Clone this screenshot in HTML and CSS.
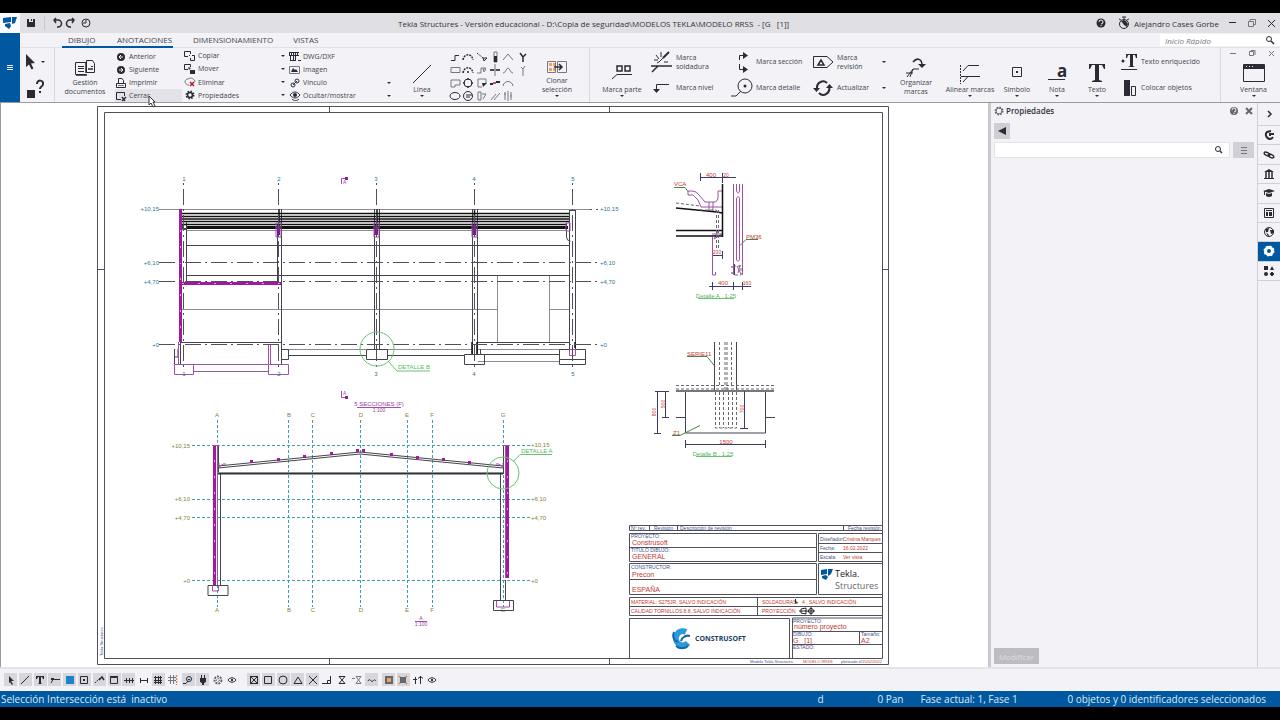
FILE: index.html
```html
<!DOCTYPE html>
<html lang="es">
<head>
<meta charset="utf-8">
<title>Tekla Structures - MODELO RRSS</title>
<link rel="stylesheet" href="styles.css">
</head>
<body>
<header class="titlebar">
  <div class="title-left">
    <span class="logo"><svg width="20" height="20" viewBox="0 0 20 20"><path class="brand" d="M3 5l8-1v5l-8 1zM12 4h5l-2 6-3 1zM5 11l5-1 1 3-2 3-4-3z"/></svg></span>
    <button class="tb" aria-label="Guardar"><svg width="12" height="12" viewBox="0 0 12 12"><path class="f" d="M2 2h2v3h4V2h2v8H2z"/><path class="f" d="M6 2h1v2H6z"/></svg></button>
    <span class="title-sep"></span>
    <button class="tb" aria-label="Deshacer"><svg width="12" height="12" viewBox="0 0 12 12"><path class="s2" d="M3 3h4a3 3 0 0 1 0 7H6M5 1L3 3l2 3"/></svg></button>
    <button class="tb" aria-label="Rehacer"><svg width="12" height="12" viewBox="0 0 12 12"><path class="s2" d="M9 3H5a3 3 0 0 0 0 7h1M7 1l2 2-2 3"/></svg></button>
    <button class="tb" aria-label="Historial"><svg width="12" height="12" viewBox="0 0 12 12"><circle class="s" cx="7" cy="6" r="4"/><path class="s" d="M7 3v3H4"/></svg></button>
  </div>
  <h1 class="title">Tekla Structures - Versión educacional - D:\Copia de seguridad\MODELOS TEKLA\MODELO RRSS&nbsp; - [G&nbsp;&nbsp; [1]]</h1>
  <div class="title-right">
    <button class="tb" aria-label="Ayuda"><svg width="12" height="12" viewBox="0 0 12 12"><circle class="f" cx="6" cy="6" r="4.500"/><path class="w" d="M4 5a2 2 0 1 1 2 2M6 8v1"/></svg></button>
    <svg class="clock" width="12" height="14" viewBox="0 0 12 14"><circle class="s" cx="6" cy="8" r="4.500"/><path class="s" d="M4 1h4M6 1v2M1 3l2 1M11 3l-2 1"/><path class="f" d="M6 4l-3 1 3 4 3 2 1-3-2-3z"/></svg>
    <span class="user">Alejandro Cases Gorbe</span>
    <button class="wb" aria-label="Minimizar"><svg width="10" height="10" viewBox="0 0 10 10"><path class="s" d="M1 4.500h7"/></svg></button>
    <button class="wb" aria-label="Restaurar"><svg width="10" height="10" viewBox="0 0 10 10"><path class="g" d="M1.500 3.500h5v5h-5zM3 3V1.500h5.500v5H7"/></svg></button>
    <button class="wb" aria-label="Cerrar ventana"><svg width="10" height="10" viewBox="0 0 10 10"><path class="s" d="M2 2l7 7M9 2L2 9"/></svg></button>
  </div>
</header>

<div class="top">
  <button class="menu" aria-label="Menú"><svg width="10" height="10" viewBox="0 0 10 10"><path class="w" d="M2 2.500h6M2 4.500h6M2 6.500h6"/></svg></button>
  <div class="top-body">
    <nav class="tabs">
      <button class="tab tab-dibujo on">DIBUJO</button>
      <button class="tab tab-anot on">ANOTACIONES</button>
      <button class="tab tab-far">DIMENSIONAMIENTO</button>
      <button class="tab tab-far">VISTAS</button>
      <label class="quick"><input type="search" placeholder="Inicio Rápido" aria-label="Inicio Rápido"><svg width="10" height="10" viewBox="0 0 10 10"><circle class="s" cx="4" cy="4" r="2.500"/><path class="s2" d="M6 6l3 3"/></svg></label>
    </nav>
    <div class="ribbon">
      <div class="group pick">
        <button class="ib" aria-label="Seleccionar"><svg width="22" height="16" viewBox="0 0 22 16"><path class="f" d="M1 0l9 9-4 .5 2.500 5-2 1-2.500-5L1 13z"/><path class="f" d="M16 7h4l-2 2z"/></svg></button>
        <button class="ib" aria-label="Consultar"><svg width="22" height="20" viewBox="0 0 22 20"><path class="f" d="M2 11h8v8H2z"/><path class="s3" d="M12 5c0-5 7-4 6 0 0 3-3 2-3 5M15 12v2"/></svg></button>
      </div>
      <div class="group g-draw">
        <button class="big b-doc"><svg width="22" height="20" viewBox="0 0 22 20"><path class="s" d="M12 16.500H1.500v-12H12M4 8.500h6M4 10.500h6M4 13.500h6M12.500 2.500h6l2 3v9h-8z"/><path class="s2" d="M14 11h5M12 4v11M2 17h11"/><path class="s" d="M17 8.500h2"/></svg><span>Gestión<br>documentos</span></button>
        <div class="list l1">
          <button class="row"><svg width="12" height="12" viewBox="0 0 12 12"><circle class="f" cx="6" cy="6" r="4"/><path class="w" d="M8 6H4M6 4L4 6l2 2"/></svg>Anterior</button>
          <button class="row"><svg width="12" height="12" viewBox="0 0 12 12"><circle class="f" cx="6" cy="6" r="4"/><path class="w" d="M4 6h4M6 4l2 2-2 2"/></svg>Siguiente</button>
          <button class="row"><svg width="12" height="12" viewBox="0 0 12 12"><path class="s" d="M3.500 7V1.500H7l1.500 2V7M1.500 6.500h9v4h-9z"/><path class="g" d="M3 8.500h6"/></svg>Imprimir</button>
          <button class="row hot"><svg width="12" height="12" viewBox="0 0 12 12"><path class="s" d="M6 9.500H1.500v-7h8V6"/><path class="s2" d="M7 7l3 4M11 7l-4 4"/></svg>Cerrar<svg class="cursor" width="9" height="13" viewBox="0 0 9 13"><path d="M1 1l6 6H5l2 4-2 1-2-4-2 2z"/></svg></button>
        </div>
        <div class="list l2">
          <button class="row"><svg width="12" height="12" viewBox="0 0 12 12"><path class="s" d="M4 6.500H.5v-5h6V4M6 5.500H5M8 5.500h2.500v5h-4V8"/></svg>Copiar<i class="caret"></i></button>
          <button class="row"><svg width="12" height="12" viewBox="0 0 12 12"><path class="s" d="M4 6.500H.5v-5h6V4"/><path class="f" d="M6 7h5v4H6zM4 4l3 1-2 2z"/></svg>Mover<i class="caret"></i></button>
          <button class="row"><svg width="12" height="12" viewBox="0 0 12 12"><path class="g" d="M5 9C0 9 0 3 4 3c3-2 7 0 7 3"/><path class="r" d="M6 6l4 4M10 6l-4 4"/></svg>Eliminar<i class="caret"></i></button>
          <button class="row"><svg width="12" height="12" viewBox="0 0 12 12"><circle class="gear" cx="6" cy="6" r="3.500"/><circle class="s2" cx="6" cy="6" r="2.500"/></svg>Propiedades<i class="caret"></i></button>
        </div>
        <div class="list l3">
          <button class="row"><svg width="12" height="12" viewBox="0 0 12 12"><path class="s" d="M.5 1v4M2.500 1v3M4.500 1v3M6.500 1v3M8.500 1v3M0 4.500h10M1.500 5v5M4.500 5v5M6.500 5v4M1 9.500h6M0 1.500h10M9 9.500h3"/></svg>DWG/DXF</button>
          <button class="row"><svg width="12" height="12" viewBox="0 0 12 12"><path class="g" d="M.5 2.500h10v7H.5z"/><path class="f" d="M2 8l2-4 2 2 1-1 2 3z"/></svg>Imagen</button>
          <button class="row"><svg width="12" height="12" viewBox="0 0 12 12"><circle class="s" cx="4" cy="8" r="2"/><circle class="s" cx="8" cy="4" r="2"/><path class="s" d="M4 8l4-4"/></svg>Vínculo<i class="caret"></i></button>
          <button class="row"><svg width="12" height="12" viewBox="0 0 12 12"><path class="s" d="M1 5c3-4 7-4 10 0-3 4-7 4-10 0M3 9c2 2 5 2 7 0"/><circle class="f" cx="6" cy="5" r="2"/></svg>Ocultar/mostrar<i class="caret"></i></button>
        </div>
        <button class="big b-40"><svg width="22" height="22" viewBox="0 0 22 22"><path class="s" d="M2 20L20 2"/></svg><span>Línea</span><i class="caret"></i></button>
        <div class="shapes">
          <button aria-label="Polilínea"><svg viewBox="0 0 12 12"><path class="s" d="M2 9.500h4v-5h4"/></svg></button>
          <button aria-label="Arco"><svg viewBox="0 0 12 12"><path class="s2 dot" d="M1 9c1-7 9-7 10 0"/></svg></button>
          <button aria-label="Punto"><svg viewBox="0 0 12 12"><path class="s dot" d="M1 2l6 5"/><path class="s" d="M7 7h4l-3 3z"/></svg></button>
          <button aria-label="Cota"><svg viewBox="0 0 12 12"><path class="g" d="M5 1h3v10H5z"/><path class="f" d="M5 5h3v6H5z"/></svg></button>
          <button aria-label="Vértice"><svg viewBox="0 0 12 12"><path class="g" d="M1 9l5-6 5 6"/></svg></button>
          <button aria-label="Bifurcar"><svg viewBox="0 0 12 12"><path class="s2" d="M7 11V6L4 2M7 6l3-3"/></svg></button>
          <button aria-label="Rectángulo"><svg viewBox="0 0 12 12"><path class="g" d="M2 3.500h9v5H2z"/></svg></button>
          <button aria-label="Arco centro"><svg viewBox="0 0 12 12"><path class="s2 dot" d="M1 9c1-7 9-7 10 0M5 8h2"/></svg></button>
          <button aria-label="Nube"><svg viewBox="0 0 12 12"><path class="g" d="M1 9h4V4h5M7 5h3l-2 3z"/></svg></button>
          <button aria-label="Cruz"><svg viewBox="0 0 12 12"><path class="g" d="M1 6h10M6 0v12"/><path class="s2" d="M1 6h4M7 6h4"/></svg></button>
          <button aria-label="Curva"><svg viewBox="0 0 12 12"><path class="g" d="M1 9c3 0 3-5 5-5s2 5 5 5"/></svg></button>
          <button aria-label="Dividir"><svg viewBox="0 0 12 12"><path class="g" d="M7 12V5L5 3M7 5l2-3"/></svg></button>
          <button aria-label="Polígono"><svg viewBox="0 0 12 12"><path class="g" d="M2 3h9v5H6v2H2z"/></svg></button>
          <button aria-label="Círculo"><svg viewBox="0 0 12 12"><circle class="s" cx="6" cy="6" r="4"/><path class="s2" d="M6 1v2M6 9v2M1 6h2M9 6h2"/></svg></button>
          <button aria-label="Región"><svg viewBox="0 0 12 12"><path class="g" d="M6 10H2V2h8v4"/><path class="f" d="M6 6h5l-4 4z"/></svg></button>
          <button aria-label="Cortar"><svg viewBox="0 0 12 12"><path class="s3" d="M1 7h3M7 5h4"/><path class="r" d="M4 6h3"/></svg></button>
          <button aria-label="Arco simple"><svg viewBox="0 0 12 12"><path class="g" d="M1 9c1-6 9-6 10 0"/></svg></button>
          <i></i>
          <button aria-label="Elipse"><svg viewBox="0 0 12 12"><ellipse class="s" cx="6" cy="6" rx="5" ry="3.500"/></svg></button>
          <button aria-label="Círculo radio"><svg viewBox="0 0 12 12"><circle class="s" cx="6" cy="6" r="4.500"/><path class="s" d="M4 5h6M4 7h4"/></svg></button>
          <button aria-label="Hoja"><svg viewBox="0 0 12 12"><path class="g" d="M2 2h3v8H2zM6 4h4l-3 5"/></svg></button>
          <button aria-label="Paralela"><svg viewBox="0 0 12 12"><path class="g" d="M2 10l5-6M5 10l6-7"/></svg></button>
          <button aria-label="Espejo"><svg viewBox="0 0 12 12"><path class="g" d="M3 2v8M6 1v10M9 2v8M2 4h2M8 6h2"/></svg></button>
        </div>
        <button class="big b-40"><svg width="22" height="18" viewBox="0 0 22 18"><path class="g" d="M1.500 3.500h8v11h-8zM11.500 3.500h9v11h-9z"/><path class="o" d="M3 5h3v3H3zM7 5h2v3H7zM3 10h3v3H3zM7 10h2v3H7z"/><path class="s2" d="M8 9h8M13 6l3 3-3 3"/></svg><span>Clonar<br>selección</span><i class="caret"></i></button>
      </div>
      <div class="group g-mark">
        <button class="big b-50"><svg width="22" height="24" viewBox="0 0 22 24"><path class="s2" d="M6 5h5v5H6zM14 5h5v5h-5z"/><path class="s" d="M1 18l5-4.500h15"/></svg><span>Marca parte</span><i class="caret"></i></button>
        <div class="pair p-80">
          <button class="row"><svg width="22" height="22" viewBox="0 0 22 22"><path class="s2" d="M0 15h21M1 21l6-6"/><path class="s" d="M5 4l3 4M10 1v5M3 9h4M8 11l5-5M13 11h4M6 12l2-1"/><path class="s3" d="M12 7l6-6"/></svg><span>Marca<br>soldadura</span></button>
          <button class="row"><svg width="22" height="18" viewBox="0 0 22 18"><path class="s" d="M5.500 12V5.500H18"/><path class="f" d="M2 10h7l-3.500 4z"/></svg><span>Marca nivel</span></button>
        </div>
        <div class="pair p-81">
          <button class="row r-sec"><svg width="14" height="22" viewBox="0 0 14 22"><path class="s" d="M2.500 9V4.500H7M2.500 13v5.500H7"/><path class="f" d="M6 1l5 3.500L6 8zM6 15l5 3.500L6 22z"/></svg><span>Marca sección</span></button>
          <button class="row"><svg width="22" height="20" viewBox="0 0 22 20"><circle class="s" cx="14" cy="8" r="7"/><circle class="f" cx="14" cy="8" r="1.500"/><path class="s" d="M0 18h5l5-5"/></svg><span>Marca detalle</span></button>
        </div>
        <div class="pair p-77">
          <button class="row"><svg width="22" height="16" viewBox="0 0 22 16"><path class="s" d="M1.500 2.500H15l6 5.500-6 5.500H1.500z"/><path class="s2" d="M6 11l3-5 3 5z"/></svg><span>Marca<br>revisión</span><i class="caret"></i></button>
          <button class="row"><svg width="22" height="18" viewBox="0 0 22 18"><path class="s3" d="M5 9a6 6 0 0 1 10-5M17 8a6 6 0 0 1-10 6"/><path class="f" d="M1 9h7l-3.500 4zM14 9h7l-3.500-4z"/></svg><span>Actualizar</span><i class="caret"></i></button>
        </div>
        <button class="big b-doc b-42"><svg width="22" height="22" viewBox="0 0 22 22"><path class="s" d="M2 21l6-8h6M1 17h7M5 21l3-8"/><path class="s2" d="M8 6c4-5 9-3 9 3"/><path class="f" d="M13 8h8l-4 4z"/></svg><span>Organizar<br>marcas</span></button>
        <button class="big b-54"><svg width="22" height="24" viewBox="0 0 22 24"><path class="s dot" d="M1.500 4v19"/><path class="s" d="M4 10l5-5.500h11M4 21l5-5.500h12M2 15.500h7"/></svg><span>Alinear marcas</span><i class="caret"></i></button>
        <button class="big b-40"><svg width="12" height="24" viewBox="0 0 12 24"><path class="s" d="M1.500 6.500h9v9h-9z"/><path class="f" d="M5 10h2v2H5z"/></svg><span>Símbolo</span><i class="caret"></i></button>
        <button class="big b-40"><svg width="22" height="24" viewBox="0 0 22 24"><text class="glyph" x="11" y="16" font-size="17">a</text><path class="s" d="M2 18.500h17"/></svg><span>Nota</span><i class="caret"></i></button>
        <button class="big b-40"><svg width="22" height="24" viewBox="0 0 22 24"><path class="f" d="M3 3h16v5h-1l-2-4h-3v15l3 1v1H6v-1l3-1V4H6L4 8H3z"/></svg><span>Texto</span><i class="caret"></i></button>
        <div class="pair p-92">
          <button class="row"><svg width="18" height="20" viewBox="0 0 18 20"><path class="f" d="M6 2h11v4h-1l-1-3h-2v11l2 1H8l2-1V3H8L7 6H6z"/><circle class="f" cx="3" cy="9" r="1.500"/><path class="s" d="M1 17.500h16"/></svg><span>Texto enriquecido</span></button>
          <button class="row"><svg width="18" height="18" viewBox="0 0 18 18"><path class="f" d="M4 1h6v16H4z"/><path class="s" d="M11.500 7.500h4v9h-4z"/></svg><span>Colocar objetos</span></button>
        </div>
      </div>
      <div class="group g-win">
        <div class="mdi"><button class="wb" aria-label="Minimizar dibujo"><svg width="10" height="10" viewBox="0 0 10 10"><path class="g" d="M2 5.500h6"/></svg></button><button class="wb" aria-label="Restaurar dibujo"><svg width="10" height="10" viewBox="0 0 10 10"><path class="g" d="M2.500 3.500h4v4h-4zM4 3V2.500h4V7"/></svg></button><button class="wb" aria-label="Cerrar dibujo"><svg width="10" height="10" viewBox="0 0 10 10"><path class="g" d="M3 3l5 5M8 3L3 8"/></svg></button></div>
        <button class="big b-win"><svg width="24" height="22" viewBox="0 0 24 22"><path class="s" d="M1.500 1.500h21v17h-21z"/><path class="f" d="M2 2h20v4H2z"/><path class="w" d="M4 3.500h1M7 3.500h1M10 3.500h1"/></svg><span>Ventana</span><i class="caret"></i></button>
      </div>
    </div>
  </div>
</div>

<main class="main">
  <section class="canvas" aria-label="Dibujo G [1]">
    <svg class="sheet" viewBox="0 103 988 564">
      <g class="frame">
        <path d="M97.500 106.500h791v558h-791zM104.500 112.500h778v546h-778zM329.500 106v6M609.500 106v6M329.500 659v6M609.500 659v6M97 269.500h7M883 269.500h6"/>
      </g>

      <!-- longitudinal section -->
      <g class="thin">
        <path d="M159 209.500h431M187 230.500h380M182 309.500h315M549 309.500h20M477 349.500h83M288 349.500h78M387 349.500h85M478 361.500h82"/>
        <path d="M497.500 276v67M549.500 276v67"/>
      </g>
      <g class="ink">
        <path d="M187 245.500h382M187 275.500h382M186.500 222v59M277.500 230v51M281.500 209v155M374.500 209v140M379.500 209v140M472.500 209v145M477.500 209v145M569.500 210v139M575.500 210v139M569 210.500h6M288 355.500h78M387 355.500h77M281.500 349.500h7v10h-7M366.500 349.500h21v10h-21zM464.500 354.500h20v10h-20zM559.500 349.500h26v15h-26zM560 359.500h25M180.500 343v21M180 342.500h101M477 342.500h92M480.500 355v-6M480 354.500h80M174.500 349v15M178 349v8h-4M566.500 223v14q0 4 4 4"/>
      </g>
      <g class="bold">
        <path d="M182 213.500h387M182 216.500h387M182 219h387M182 221.500h387M182 224.500h385"/>
        <path class="heavy" d="M187 227.500h381"/>
        <path d="M279 209v14M377 209v14M474.500 209v14M183 224v5h3M575 342v6M477 342v12M472 342v12"/>
      </g>
      <path class="mag-wide" d="M180.500 209v133"/>
      <path class="mag-wide" d="M181 283.500h100"/>
      <path class="speck" d="M182 283.500h98M180.500 230v110"/>
      <path class="mag" d="M174.500 364.500h19v10h-19zM268.500 364.500h20v10h-20zM194 371.500h74M268.500 344v20M270.500 344v20M178.500 342v22M193 364.500h75M569.500 349.500h6v6h-6zM566 223h4v8h-4zM276 223h5v14h-5zM374 223h5v14h-5zM472 223h5v14h-5z"/>
      <path class="mag2" d="M278.500 225v10M376.500 225v10M474.500 225v10"/>
      <g class="axis">
        <path d="M183.500 189v180M278.500 189v180M376.500 189v180M474.500 189v180M572.500 189v180"/>
        <path d="M159 262.500h440M159 281.500h440M159 344.500h440"/>
      </g>
      <path class="axis-dot" d="M183.500 183v6M278.500 183v6M376.500 183v6M474.500 183v6M572.500 183v6M590 209.500h9"/>
      <g class="blue t6 mid">
        <text x="184" y="181">1</text><text x="279" y="181">2</text><text x="376" y="181">3</text><text x="474" y="181">4</text><text x="573" y="181">5</text>
        <text x="184" y="376">1</text><text x="279" y="376">2</text><text x="376" y="376">3</text><text x="474" y="376">4</text><text x="573" y="376">5</text>
      </g>
      <g class="blue t6 end"><text x="159" y="211">+10,15</text><text x="159" y="265">+6,10</text><text x="159" y="284">+4,70</text><text x="159" y="347">+0</text></g>
      <g class="blue t6"><text x="600" y="211">+10,15</text><text x="600" y="265">+6,10</text><text x="600" y="284">+4,70</text><text x="600" y="347">+0</text></g>
      <g class="green"><circle cx="377" cy="349" r="17"/><path d="M388 361l9 10h33"/></g>
      <text class="green-t t6" x="398" y="369">DETALLE B</text>
      <path class="mag" d="M341.500 184v-5.500h5M341.500 391v6.500h5"/>
      <path class="dots thin-dots" d="M345 178.500h3M345 397.500h3"/>
      <g class="mag-t t5"><text x="343" y="184">A</text><text x="343" y="395">A</text></g>

      <!-- transverse section -->
      <g class="mag-t t5 mid"><text class="t6" x="379" y="406">5 SECCIONES (F)</text><text x="379" y="412">1:100</text><text x="421" y="620">A</text><text x="421" y="626">1:100</text></g>
      <path class="mag" d="M357 407.500h44M415 621.500h12"/>
      <path class="grid" d="M217.500 420v187M288.500 420v187M312.500 420v187M360.500 420v187M407.500 420v187M432.500 420v187M503.500 420v187M192 445.500h338M192 499.500h338M192 517.500h338M192 580.500h338"/>
      <g class="olive t6 mid">
        <text x="217" y="417">A</text><text x="289" y="417">B</text><text x="313" y="417">C</text><text x="361" y="417">D</text><text x="407" y="417">E</text><text x="432" y="417">F</text><text x="503" y="417">G</text>
        <text x="217" y="612">A</text><text x="289" y="612">B</text><text x="313" y="612">C</text><text x="361" y="612">D</text><text x="407" y="612">E</text><text x="432" y="612">F</text><text x="503" y="612">G</text>
      </g>
      <g class="olive t6 end"><text x="190" y="448">+10,15</text><text x="190" y="501">+6,10</text><text x="190" y="520">+4,70</text><text x="190" y="583">+0</text></g>
      <g class="olive t6"><text x="531" y="447">+10,15</text><text x="531" y="501">+6,10</text><text x="531" y="520">+4,70</text><text x="531" y="583">+0</text></g>
      <path class="ink" d="M220.500 474v111M218.500 445v29M208 585.500h20v10h-20zM500.500 474v126M505.500 580v20M503.500 445v29M493.500 600.500h20v10h-20zM218 466l142-14 143 14M218 468l142-14 143 14"/>
      <path class="beam" d="M218 473.500h285"/>
      <path class="thin" d="M218 472.500h285"/>
      <path class="mag-wide" d="M214.500 446v139M507.500 446v132"/>
      <path class="speck" d="M214.500 460v120M507.500 460v115"/>
      <path class="mag" d="M213 445.500h6M217.500 446v139M503 445.500h6M505.500 446v132M212.500 585v6h6v-6M496.500 601v6h13v-6M219 463v4l4-3h3M503 463v4l-4-3h-3"/>
      <path class="dots" d="M250 461.500h3M277 459.500h3M303 456.500h3M330 453.500h3M356 450.500h3M362 450.500h3M390 454.500h3M416 457.500h3M442 459.500h3M468 462.500h3"/>
      <g class="green"><circle cx="503" cy="473" r="16"/><path d="M513 462l7-7.500h32"/></g>
      <text class="green-t t6" x="521" y="453">DETALLE A</text>

      <!-- detail A -->
      <path class="dim" d="M700 177.500h36M700.500 173v8M722.500 173v10M712 255.500h11M722.500 251v8M712.500 251v8M709 286.500h42M712.500 282v8M733.500 282v8M742.500 282v8M734.500 264v11M731 267h4M731 273h4"/>
      <g class="red t5 mid"><text class="t6" x="711" y="177">400</text><text x="726" y="177">20</text><text x="717" y="254">200</text><text class="t6" x="723" y="285">400</text><text x="747" y="285">160</text></g>
      <g class="red t6"><text x="674" y="186">VCA</text><text x="746" y="239">PM36</text></g>
      <path class="leader" d="M674 187.500h11l3 4M758 239.500h-12l-6 6"/>
      <path class="mag" d="M688 191l4 0q5 0 7 4l6 7h10q2 0 3-4v-7h4M688 191v4h5l5 5 3 7h21M709 202v9M713 202v9M712.500 237v38l3 0v-3M733.500 184v91M742.500 184v91M736.500 184v7q2 4 3 0v-7M736.500 198q2-3 3 0v62q-2 3-3 0zM712 234h10l-8 5 4-8M737 266l4 8M738 273l2-8"/>
      <path class="bold" d="M722.500 184v53M676 208l41 4 5 1M676 230.500h47M676 236h47"/>
      <path class="dash" d="M676 203l24 3M716.500 210v39M718.500 210v39M700 210h16M733 266h8v9h-8"/>
      <g class="green-t t6 mid"><text x="716" y="298">Detalle A , 1:25</text></g>
      <path class="green" d="M698 298.500h36"/>

      <!-- detail B -->
      <path class="ink" d="M714.500 342v49M736.500 342v49M685.500 391v42h80v-42M676 417.500h9M766 417.500h9"/>
      <path class="deck" d="M676 391h98"/>
      <path class="dash" d="M719.500 342v44M725 342v48M727 342v48M731.500 342v44M676 385.500h98M676 389h98M715.500 392v36h21v-36M719.500 392v36M723.500 392v36M728.500 392v36M732.500 392v36"/>
      <path class="dim" d="M655 391.500h14M657.500 391v42M654 433.500h7M665.500 391v26M662 417.500h7M744.500 391v37M740 428.500h8M685 444.500h81M685.500 440v8M765.500 440v8"/>
      <path class="leader" d="M687 356.500h20l8 10M672 435.500h8l20-10"/>
      <g class="red t6"><text x="687" y="356">SERIE11</text><text x="673" y="435">Z1</text></g>
      <g class="red t5 mid"><text class="t6" x="726" y="444">1500</text><text transform="rotate(-90 656 412)" x="656" y="412">800</text><text transform="rotate(-90 665 404)" x="665" y="404">500</text><text transform="rotate(-90 744 409)" x="744" y="409">700</text></g>
      <text class="green-t t6 mid" x="713" y="456">Detalle B , 1:25</text>
      <path class="green" d="M696 456.500h36"/>

      <!-- title block -->
      <path class="frame" d="M629.500 525.500h253v5h-253zM649.500 526v5M677.500 526v5M843.500 526v5M629.500 533.500h187v28h-187zM630 547.500h186M818.500 533.500h64v28h-64zM819 543.500h63M819 552.500h63M629.500 563.500h187v31h-187zM630 579.500h186M818.500 563.500h64v31h-64zM629.500 597.500h253v18h-253zM630 606.500h252M757.500 598v17M629.500 618.500h160v40M629.500 618v40M792.500 658v-40h90M793 631.500h89M793 644.500h89M859.500 632v12"/>
      <g class="navy t5"><text x="631" y="530">Nº rev.</text><text x="654" y="530">Revisión</text><text x="680" y="530">Descripción de revisión</text><text x="848" y="530">Fecha revisión</text><text x="631" y="538">PROYECTO:</text><text x="631" y="552">TÍTULO DIBUJO:</text><text x="631" y="569">CONSTRUCTOR:</text><text x="820" y="541">Diseñador:</text><text x="820" y="550">Fecha:</text><text x="820" y="559">Escala:</text><text x="793" y="623">PROYECTO:</text><text x="793" y="636">DIBUJO:</text><text x="861" y="636">Tamaño:</text><text x="793" y="649">ESTADO:</text></g>
      <g class="red t5"><text x="843" y="541">Cristina Marques</text><text x="843" y="550">16.02.2022</text><text x="843" y="559">Ver vista</text><text x="631" y="604">MATERIAL: S275JR, SALVO INDICACIÓN</text><text x="631" y="613">CALIDAD TORNILLOS 8.8, SALVO INDICACIÓN</text><text x="762" y="604">SOLDADURAS</text><text x="802" y="604">4 , SALVO INDICACIÓN</text><text x="762" y="613">PROYECCIÓN</text></g>
      <path class="mark" d="M795.500 599v4h2l-2-2M801 609l5-1v6l-5-1zM799 611h8M811 607v8M807 611h8"/><circle class="mark" cx="811" cy="611" r="2.500"/>
      <g class="red t7"><text x="632" y="545">Construsoft</text><text x="632" y="559">GENERAL</text><text x="632" y="577">Precon</text><text x="632" y="592">ESPAÑA</text><text x="794" y="629">número proyecto</text><text x="793" y="643">G&nbsp;&nbsp; [1]</text><text x="861" y="643">A2</text></g>
      <path class="logo-fill" d="M821 570l6-1v5l-6 1zM828 569h5l-2 5-3 2zM822 576l4-1 2 2-2 3-4-2z"/>
      <g class="tekla"><text x="835" y="577">Tekla.</text><text class="grey" x="835" y="589">Structures</text></g>
      <path class="cs1" d="M686 632a7 7 0 1 0 2 11"/><path class="cs2" d="M674 632q-3 7 4 10M690 636a7 7 0 0 0-9 5M688 646a9 9 0 0 1-12 0"/>
      <text class="cs-t" x="695" y="641">CONSTRUSOFT</text>
      <g class="t4"><text class="navy" x="750" y="663">Modelo Tekla Structures</text><text class="red" x="803" y="663">MODELO RRSS</text><text class="navy" x="841" y="663">plotteado el</text><text class="red" x="862" y="663">15/02/2022</text><text class="navy" transform="rotate(-90 103 656)" x="103" y="656">Tekla Structures</text></g>
    </svg>
  </section>

  <aside class="panel">
    <div class="panel-head"><svg width="10" height="10" viewBox="0 0 10 10"><circle class="gearg" cx="5" cy="5" r="3.500"/><circle class="gring" cx="5" cy="5" r="3"/></svg><h2>Propiedades</h2>
      <button class="ph" aria-label="Ayuda del panel"><svg width="10" height="10" viewBox="0 0 10 10"><circle class="fg" cx="5" cy="5" r="4"/><path class="w" d="M3 4a2 2 0 1 1 2 2M5 7v1"/></svg></button>
      <button class="ph" aria-label="Cerrar panel"><svg width="10" height="10" viewBox="0 0 10 10"><path class="g2" d="M2 2l6 6M8 2L2 8"/></svg></button></div>
    <button class="back" aria-label="Atrás"><svg width="10" height="10" viewBox="0 0 10 10"><path class="f" d="M9 1v8L1 5z"/></svg></button>
    <div class="find"><label class="find-box"><input type="search" aria-label="Buscar propiedades"><svg width="10" height="10" viewBox="0 0 10 10"><circle class="s" cx="4" cy="4" r="2.500"/><path class="s2" d="M6 6l2 2"/></svg></label><button class="find-menu" aria-label="Opciones"><svg width="8" height="8" viewBox="0 0 8 8"><path class="g" d="M1 1.500h6M1 4.500h6M1 7.500h6"/></svg></button></div>
    <button class="modify" disabled>Modificar</button>
  </aside>

  <nav class="rail">
    <button class="rail-top" aria-label="Contraer"><svg width="12" height="12" viewBox="0 0 12 12"><path class="s2" d="M5 3l3 3-3 3"/></svg></button>
    <div class="rail-list">
      <button aria-label="Trimble"><svg width="12" height="12" viewBox="0 0 12 12"><path class="s3" d="M10 8c-3 5-10-1-6-5l4-1M11 5H7v2"/></svg></button>
      <button aria-label="Referencias"><svg width="12" height="12" viewBox="0 0 12 12"><ellipse class="s2" cx="4" cy="5" rx="3" ry="1.500" transform="rotate(25 4 5)"/><ellipse class="s2" cx="8" cy="7" rx="3" ry="1.500" transform="rotate(25 8 7)"/></svg></button>
      <button aria-label="Biblioteca"><svg width="12" height="12" viewBox="0 0 12 12"><path class="f" d="M1 4l5-3 5 3zM1 10h10v1H1z"/><path class="s2" d="M3 4v6M6 4v6M9 4v6"/></svg></button>
      <button aria-label="Formación"><svg width="12" height="12" viewBox="0 0 12 12"><path class="f" d="M0 4l6-2 6 2-6 2zM3 6l3 1 3-1v3q-3 2-6 0z"/><path class="s" d="M1.500 4v4"/></svg></button>
      <button aria-label="Ventanas"><svg width="12" height="12" viewBox="0 0 12 12"><path class="s" d="M1.500 1.500h9v9h-9zM3 3.500h6"/><path class="f" d="M3 5h2v4H3zM6 5h3v4H6z"/></svg></button>
      <button aria-label="Mundo"><svg width="12" height="12" viewBox="0 0 12 12"><circle class="s" cx="6" cy="6" r="4.500"/><path class="f" d="M2 3l4-1-1 4H3l3 3-1 2zM7 4h4v3L8 8z"/></svg></button>
      <button class="active" aria-label="Propiedades"><svg width="12" height="12" viewBox="0 0 12 12"><circle class="gearw" cx="6" cy="6" r="4"/><circle class="wring" cx="6" cy="6" r="3.500"/></svg></button>
      <button aria-label="Aplicaciones"><svg width="12" height="12" viewBox="0 0 12 12"><path class="f" d="M1 1h4v4H1zM9 1l2 4H7zM8 8V7h2v1h1v2h-1v1H8v-1H7V8z"/><circle class="f" cx="3" cy="9" r="2"/></svg></button>
    </div>
  </nav>
</main>

<div class="tools">
  <div class="strip strip-a">
    <button class="down" aria-label="Seleccionar todo"><svg viewBox="0 0 12 12"><path class="f" d="M4 2l5 5H6l2 3-1 1-2-3-1 1z"/></svg></button>
    <button class="down" aria-label="Líneas"><svg viewBox="0 0 12 12"><path class="s" d="M2 10l8-8"/></svg></button>
    <button class="down" aria-label="Textos"><svg viewBox="0 0 12 12"><path class="f" d="M2 2h8v3H9L8 3H7v6l1 1H4l1-1V3H4L3 5H2z"/></svg></button>
    <button class="down" aria-label="Marcas"><svg viewBox="0 0 12 12"><path class="s" d="M2 9l2-3.500h7M2 5.500h4M2 4.500h3"/></svg></button>
    <button class="down" aria-label="Partes"><svg viewBox="0 0 12 12"><path class="bluefill" d="M2 2h8v8H2z"/></svg></button>
    <button class="down" aria-label="Símbolos"><svg viewBox="0 0 12 12"><path class="s" d="M2.500 2.500h7v7h-7z"/><path class="f" d="M5 5h2v2H5z"/></svg></button>
    <button class="down" aria-label="Soldaduras"><svg viewBox="0 0 12 12"><path class="s dot" d="M2 9l5-5"/><path class="s2" d="M6 6l3-3 2 3"/></svg></button>
    <button class="down" aria-label="Vistas"><svg viewBox="0 0 12 12"><path class="s" d="M2.500 3.500h7v6h-7zM2 2.500h8"/></svg></button>
    <button class="down" aria-label="Cotas"><svg viewBox="0 0 12 12"><path class="s" d="M1 6.500h10M3.500 4v5M6.500 4v5M9.500 4v5"/></svg></button>
    <button aria-label="Cota simple"><svg viewBox="0 0 12 12"><path class="s" d="M2 6.500h8M2.500 4v5M9.500 4v5"/></svg></button>
    <button class="down" aria-label="Rejillas"><svg viewBox="0 0 12 12"><path class="s" d="M2 3.500h8M2 6.500h8M2 8.500h8M3.500 2v8M6.500 2v8M8.500 2v8"/></svg></button>
    <button aria-label="Línea de rejilla"><svg viewBox="0 0 12 12"><path class="g" d="M1 3.500h8M1 6.500h8M3.500 1v9M6.500 1v9"/><path class="os dot" d="M9.500 1v10"/></svg></button>
    <button class="down" aria-label="Detalles"><svg viewBox="0 0 12 12"><circle class="s" cx="7" cy="5" r="2.500"/><path class="s" d="M1 9.500h3L6 7M6 5.500h2"/></svg></button>
    <button class="down" aria-label="Complementos"><svg viewBox="0 0 12 12"><path class="f" d="M3 4h6v4L7 9v2H5V9L3 8zM4 1h1v3H4zM7 1h1v3H7z"/></svg></button>
    <button aria-label="Sombreado"><svg viewBox="0 0 12 12"><circle class="g2 dot" cx="6" cy="6" r="3.500"/><circle class="g dot" cx="6" cy="6" r="1.500"/></svg></button>
    <button aria-label="Visibilidad"><svg viewBox="0 0 12 12"><path class="s" d="M2 6c2-3 6-3 8 0-2 3-6 3-8 0"/><path class="f" d="M5 5h2v2H5z"/></svg></button>
  </div>
  <div class="strip strip-b">
    <button class="down" aria-label="Ajuste a puntos"><svg viewBox="0 0 12 12"><path class="s" d="M2.500 2.500h7v7h-7zM2 2l8 8M10 2l-8 8"/></svg></button>
    <button class="down" aria-label="Puntos finales"><svg viewBox="0 0 12 12"><path class="s" d="M2.500 2.500h7v7h-7z"/></svg></button>
    <button class="down" aria-label="Centros"><svg viewBox="0 0 12 12"><circle class="s" cx="6" cy="6" r="4"/></svg></button>
    <button class="down" aria-label="Puntos medios"><svg viewBox="0 0 12 12"><path class="s" d="M2 9.500L6 3l4 6.500z"/></svg></button>
    <button class="down" aria-label="Intersección"><svg viewBox="0 0 12 12"><path class="s" d="M2 2l8 8M10 2l-8 8"/></svg></button>
    <button aria-label="Perpendicular"><svg viewBox="0 0 12 12"><path class="s" d="M1 9.500h8.500V2M6.500 10V6.500h3"/></svg></button>
    <button aria-label="Más cercano"><svg viewBox="0 0 12 12"><path class="s" d="M3 2.500h6l-6 7h6l-6-7"/></svg></button>
    <button aria-label="Extensión"><svg viewBox="0 0 12 12"><path class="g" d="M1 4.500h3M5 2.500h5l-5 7h5l-5-7"/></svg></button>
    <button class="down" aria-label="Libre"><svg viewBox="0 0 12 12"><path class="s" d="M2 7c2-4 3 2 5 0s2-1 3 0"/></svg></button>
  </div>
  <div class="strip strip-c">
    <button class="down" aria-label="Capa de modelo"><svg viewBox="0 0 12 12"><path class="fg" d="M2 2h8v8H2z"/><path class="o" d="M4 4h4v4H4z"/></svg></button>
    <button class="down" aria-label="Capa de dibujo"><svg viewBox="0 0 12 12"><path class="os" d="M2 2l8 8M10 2l-8 8"/><path class="fg" d="M3 3h6v6H3z"/></svg></button>
    <button aria-label="Orto"><svg viewBox="0 0 12 12"><path class="s" d="M3.500 3v7M1 5.500h4M8.500 2v8M6 4.500l2.500-2 2.500 2"/></svg></button>
    <button aria-label="Ver"><svg viewBox="0 0 12 12"><path class="s" d="M2 6c2-3 6-3 8 0-2 3-6 3-8 0"/><path class="f" d="M5 5h2v2H5z"/></svg></button>
  </div>
</div>
<footer class="status">
  <span class="st-msg">Selección Intersección está&nbsp; inactivo</span>
  <span class="st-d">d</span>
  <span class="st-pan">0&nbsp;Pan</span>
  <span class="st-phase">Fase actual: 1, Fase 1</span>
  <span class="st-sel">0 objetos y 0 identificadores seleccionados</span>
</footer>
</body>
</html>
```
FILE: styles.css
```css
* { box-sizing: border-box; }
body {
  margin: 0;
  padding: 13px 0;
  min-height: 100vh;
  background: #000;
  color: #45454d;
  font-family: "Open Sans", "Noto Sans", sans-serif;
  font-size: 7px;
  line-height: 9px;
  display: flex;
  flex-direction: column;
}
button, input {
  font: inherit;
  color: inherit;
  border: 0;
  padding: 0;
  margin: 0;
  background: none;
  border-radius: 0;
}
input { outline: 0; min-width: 0; -webkit-appearance: none; appearance: none; }
svg { flex: none; display: block; }

/* icon strokes */
.s, .s2, .s3, .g, .g2, .r, .w, .os { fill: none; stroke: #2b2b35; stroke-width: 1; }
.s2 { stroke-width: 1.500; }
.s3 { stroke-width: 2; }
.g { stroke: #777780; }
.g2 { stroke: #66666e; stroke-width: 2; }
.r { stroke: #b5182c; stroke-width: 1.500; }
.w { stroke: #f2f2f7; }
.os { stroke: #e08a4a; stroke-width: 1.500; }
.f { fill: #2b2b35; }
.fg { fill: #66666e; }
.o { fill: #f0a05a; }
.bluefill { fill: #1c84c6; }
.dot { stroke-dasharray: 2 1; }
.gear { fill: none; stroke: #2b2b35; stroke-width: 2; stroke-dasharray: 1.400 1.350; }
.gearg { fill: none; stroke: #66666e; stroke-width: 2; stroke-dasharray: 1.400 1.350; }
.gring { fill: none; stroke: #66666e; stroke-width: 1; }
.gearw { fill: none; stroke: #fff; stroke-width: 3; stroke-dasharray: 1.600 1.540; }
.wring { fill: none; stroke: #fff; stroke-width: 3; }
.brand { fill: #0058a0; }
.glyph { font-family: "Noto Sans", sans-serif; font-weight: bold; fill: #2b2b35; }

/* title bar */
.titlebar {
  height: 20px;
  background: #e0e0e4;
  display: grid;
  grid-template-columns: 398px 1fr auto;
  align-items: center;
  font-size: 8px;
  color: #33333b;
}
.title-left, .title-right { display: flex; align-items: center; }
.logo { width: 20px; background: #fafaff; }
.tb { width: 14px; display: flex; justify-content: center; }
.logo + .tb { margin-left: 4px; }
.title-sep { width: 1px; height: 14px; background: #c8c8ce; margin: 0 5px 0 6px; }
.title { margin: 0; font-size: 8px; font-weight: 400; white-space: nowrap; }
.title-right { justify-content: flex-end; }
.clock { margin: 0 4px 0 10px; }
.user { margin-right: 4px; white-space: nowrap; }
.wb { width: 19px; height: 10px; display: flex; justify-content: center; }

/* tabs and ribbon */
.top { display: flex; background: #f2f2f7; border-bottom: 1px solid #9a9aa0; }
.menu { width: 20px; background: #0058a0; display: flex; align-items: center; justify-content: center; }
.top-body { flex: 1; min-width: 0; }
.tabs { height: 15px; display: flex; padding-left: 42px; border-bottom: 1px solid #e2e2e8; font-size: 8px; }
.tab { height: 15px; border-bottom: 2px solid transparent; text-align: left; padding: 0; }
.tab.on { border-bottom-color: #0058a0; }
.tab-dibujo { width: 50px; padding-left: 6px; }
.tab-anot { width: 61px; padding-left: 5px; }
.tab-far { padding-left: 20px; }
.quick { width: 120px; height: 12px; margin: 1px 0 0 auto; background: #fff; display: flex; align-items: center; padding: 0 5px; }
.quick input { flex: 1; font-style: italic; }
.quick input::placeholder { color: #77777f; opacity: 1; }
.ribbon { height: 54px; display: flex; }
.group { display: flex; border-right: 1px solid #d8d8de; }
.pick { width: 35px; flex-direction: column; justify-content: space-between; padding: 6px 0 3px 5px; }
.g-draw { width: 535px; }
.g-mark { flex: 1; padding-left: 7px; }
.g-win { width: 59px; flex-direction: column; border-right: 0; }
.mdi { display: flex; justify-content: flex-end; }
.big { display: flex; flex-direction: column; align-items: center; justify-content: flex-end; padding-bottom: 3px; white-space: nowrap; text-align: center; }
.b-doc { width: 60px; padding-bottom: 6px; }
.b-40 { width: 40px; }
.b-42 { width: 44px; margin-left: 5px; }
.b-50 { width: 50px; }
.b-54 { width: 54px; margin-left: 5px; }
.b-win { width: 59px; flex: 1; padding-left: 6px; }
.caret { width: 0; height: 0; border: 2px solid transparent; border-top-color: #2b2b35; border-bottom: 0; margin: 1px 0 2px; }
.list { display: flex; flex-direction: column; justify-content: space-between; }
.row { display: flex; align-items: center; text-align: left; white-space: nowrap; padding: 0; }
.list .row { height: 13px; gap: 2px; position: relative; }
.row .caret { margin: 0 3px 0 auto; }
.l1 { width: 67px; padding-top: 2px; }
.l2 { width: 106px; padding: 1px 0 0 2px; }
.l3 { width: 106px; padding: 2px 0 0 1px; }
.hot { background: #e2e2e8; }
.cursor { position: absolute; left: 33px; top: 6px; z-index: 2; fill: #fff; stroke: #33333b; stroke-width: 1; }
.g-draw .b-40 { margin-left: 8px; }
.shapes { width: 80px; margin-left: 7px; padding-top: 2px; display: grid; grid-template-columns: repeat(6, 1fr); }
.shapes svg { width: 12px; height: 12px; }
.pair { display: flex; flex-direction: column; justify-content: space-between; padding: 2px 0 3px; }
.pair .row { height: 23px; gap: 3px; }
.p-80 { width: 80px; margin-left: 4px; }
.p-81 { width: 81px; }
.r-sec { padding-left: 6px; }
.r-sec svg { margin-right: 2px; }
.p-77 { width: 77px; }
.p-92 { margin-left: 3px; }

/* drawing area */
.main { flex: 1; min-height: 0; display: flex; background: #f2f2f7; }
.canvas { flex: 1; min-width: 0; background: #fff; box-shadow: inset 1px 0 #9a9aa0; display: flex; }
.sheet { width: 100%; height: auto; flex: 1; min-width: 0; font-family: "Liberation Sans", Arial, sans-serif; }
.sheet path, .sheet circle { fill: none; stroke-width: 1; }
.frame, .frame path { stroke: #50505c; }
.thin path, path.thin { stroke: #8c8c92; }
.ink path, path.ink { stroke: #44444c; }
.sheet .bold, .bold path { stroke: #111; stroke-width: 1.500; }
.sheet .bold .heavy { stroke-width: 3; }
.sheet .beam { stroke: #33333b; stroke-width: 2; }
.sheet .deck { stroke: #77777f; stroke-width: 2; }
.sheet .mag-wide { stroke: #a01aa0; stroke-width: 3; }
.sheet .speck { stroke: #dca0dc; stroke-dasharray: 2 14; }
.sheet .mag { stroke: #a050a8; }
.sheet .mag2 { stroke: #7a1a90; stroke-width: 3; }
.axis path { stroke: #50505c; stroke-dasharray: 16 4 2 4; }
.sheet .axis-dot { stroke: #50505c; stroke-dasharray: 2 4; }
.sheet .grid { stroke: #3a9fb0; stroke-dasharray: 3 2; }
.sheet .dots { stroke: #a01aa0; stroke-width: 3; }
.sheet .green, .green path, .green circle { stroke: #6cbf74; fill: none; }
.sheet .dim { stroke: #3c3c66; }
.sheet .leader { stroke: #4a8050; }
.sheet .dash { stroke: #66666e; stroke-dasharray: 3 2; }
.sheet .mark { stroke: #222; }
.sheet .logo-fill { fill: #0058a0; }
.sheet .cs1 { stroke: #2a9bdc; stroke-width: 6; }
.sheet .cs2 { stroke: #1368a8; stroke-width: 2; }
.t4 { font-size: 4px; }
.t5 { font-size: 5px; }
.t6 { font-size: 6px; }
.t7 { font-size: 7px; }
.mid { text-anchor: middle; }
.end { text-anchor: end; }
.blue { fill: #2f7290; }
.olive { fill: #86803c; }
.navy { fill: #44508c; }
.red { fill: #c43a30; }
.mag-t { fill: #9a3aa4; }
.green-t { fill: #55b860; }
.tekla { font-family: "Open Sans", "Noto Sans", sans-serif; font-size: 9px; fill: #222; }
.grey { fill: #66666e; }
.cs-t { font-family: "Open Sans", "Noto Sans", sans-serif; font-size: 7px; font-weight: 700; fill: #1a3f66; }

/* properties panel */
.panel { width: 269px; border-left: 3px solid #c8c8d0; padding: 2px 3px 3px; display: flex; flex-direction: column; align-items: flex-start; }
.panel-head { width: 100%; height: 11px; display: flex; align-items: center; gap: 2px; }
.panel-head h2 { flex: 1; margin: 0; font-size: 8px; font-weight: 600; color: #33333b; }
.ph + .ph { margin: 0 0 0 3px; }
.back { width: 16px; height: 16px; margin-top: 7px; background: #ceced4; display: flex; align-items: center; justify-content: center; }
.find { width: 100%; display: flex; gap: 3px; margin-top: 3px; }
.find-box { flex: 1; height: 16px; background: #fff; border: 1px solid #e4e4ea; display: flex; align-items: center; padding-right: 5px; }
.find-box input { flex: 1; }
.find-menu { width: 21px; height: 16px; background: #d0d0d6; display: flex; align-items: center; justify-content: center; }
.modify { width: 45px; height: 16px; margin-top: auto; background: #bcbcc2; color: #dcdce2; font-size: 8px; }
.rail { width: 23px; border-left: 1px solid #d0d0d6; }
.rail button { width: 100%; display: flex; align-items: center; justify-content: center; border-bottom: 1px solid #d0d0d6; }
.rail-top { height: 23px; }
.rail-list { height: 155px; display: flex; flex-direction: column; }
.rail-list button { flex: 1; }
.rail-list .active { background: #0058a0; }

/* bottom toolbars */
.tools { height: 24px; background: #f2f2f7; border-top: 2px solid #e4e4e8; display: flex; align-items: flex-start; padding: 4px 4px 0; }
.strip { display: flex; justify-content: space-between; }
.strip button { width: 13px; height: 13px; display: flex; align-items: center; justify-content: center; }
.strip button svg { width: 12px; height: 12px; }
.strip-a { width: 235px; }
.strip-b { width: 131px; margin-left: 8px; }
.strip-c { width: 57px; margin-left: 4px; }
.down { background: #d6d6dc; }

/* status bar */
.status { height: 16px; background: #0058a0; color: #dceaf5; font-size: 10px; line-height: 16px; display: flex; padding: 0 14px 0 1px; white-space: nowrap; }
.st-msg { flex: 1; }
.st-d { width: 60px; }
.st-pan { width: 43px; }
.st-phase { width: 147px; }
```
